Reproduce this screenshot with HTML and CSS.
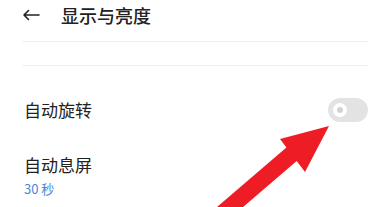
FILE: index.html
```html
<!DOCTYPE html>
<html lang="zh-CN">
<head>
  <meta charset="UTF-8" />
  <meta name="viewport" content="width=device-width, initial-scale=1.0"/>
  <title>显示与亮度</title>
  <link rel="stylesheet" href="styles.css">
</head>
<body>
  <div class="page">
    <!-- Top bar -->
    <div class="top-bar">
      <svg class="back-icon" width="18" height="12" viewBox="0 0 18 12">
        <path d="M17 6H2M6.5 1.5L2 6l4.5 4.5" fill="none" stroke="#222" stroke-width="1.6" stroke-linecap="round" stroke-linejoin="round"/>
      </svg>
      <h1 class="page-title">显示与亮度</h1>
    </div>

    <div class="divider"></div>
    <div class="divider-gap"></div>
    <div class="divider"></div>

    <!-- Settings -->
    <div class="setting-row">
      <span class="setting-label">自动旋转</span>
      <div class="switch">
        <span class="switch-knob"></span>
      </div>
    </div>

    <div class="setting-item">
      <div class="setting-label">自动息屏</div>
      <div class="setting-value">30 秒</div>
    </div>

    <!-- Annotation arrow -->
    <svg class="hint-arrow" width="388" height="207" viewBox="0 0 388 207">
      <polygon points="329,126 280,139 286.4,147.5 207.7,215 233.8,215 296.7,161.1 305,172" fill="#ee1d25"/>
    </svg>
  </div>
</body>
</html>
```

FILE: styles.css
```css
body {
  margin: 0;
  background: #fff;
  font-family: "Noto Sans CJK SC", "Noto Sans", sans-serif;
  color: #222;
}

.page {
  position: relative;
  width: 388px;
  height: 207px;
  overflow: hidden;
}

.top-bar {
  display: flex;
  align-items: center;
  height: 30px;
  padding: 0 22px;
  margin-bottom: 11px;
}

.back-icon {
  display: block;
  margin-right: 21px;
}

.page-title {
  margin: 0;
  font-size: 18px;
  font-weight: 500;
  line-height: 30px;
}

.divider {
  height: 1px;
  background: #efefef;
  margin: 0 20px 0 22px;
}

.divider-gap {
  height: 23px;
}

.setting-row {
  display: flex;
  align-items: center;
  justify-content: space-between;
  height: 44px;
  margin: 22px 20px 0 24px;
}

.setting-label {
  font-size: 17px;
  line-height: 24px;
}

.switch {
  display: flex;
  align-items: center;
  width: 40px;
  height: 24px;
  border-radius: 12px;
  background: #e3e3e3;
  padding-left: 5px;
  box-sizing: border-box;
}

.switch-knob {
  width: 6px;
  height: 6px;
  border-radius: 50%;
  background: #d3d3d3;
  border: 4px solid #fff;
}

.setting-item {
  margin: 21px 20px 0 24px;
}

.setting-value {
  margin-top: 3px;
  font-size: 13px;
  line-height: 18px;
  color: #4a86d8;
}

.hint-arrow {
  position: absolute;
  left: 0;
  top: 0;
  pointer-events: none;
}
```
